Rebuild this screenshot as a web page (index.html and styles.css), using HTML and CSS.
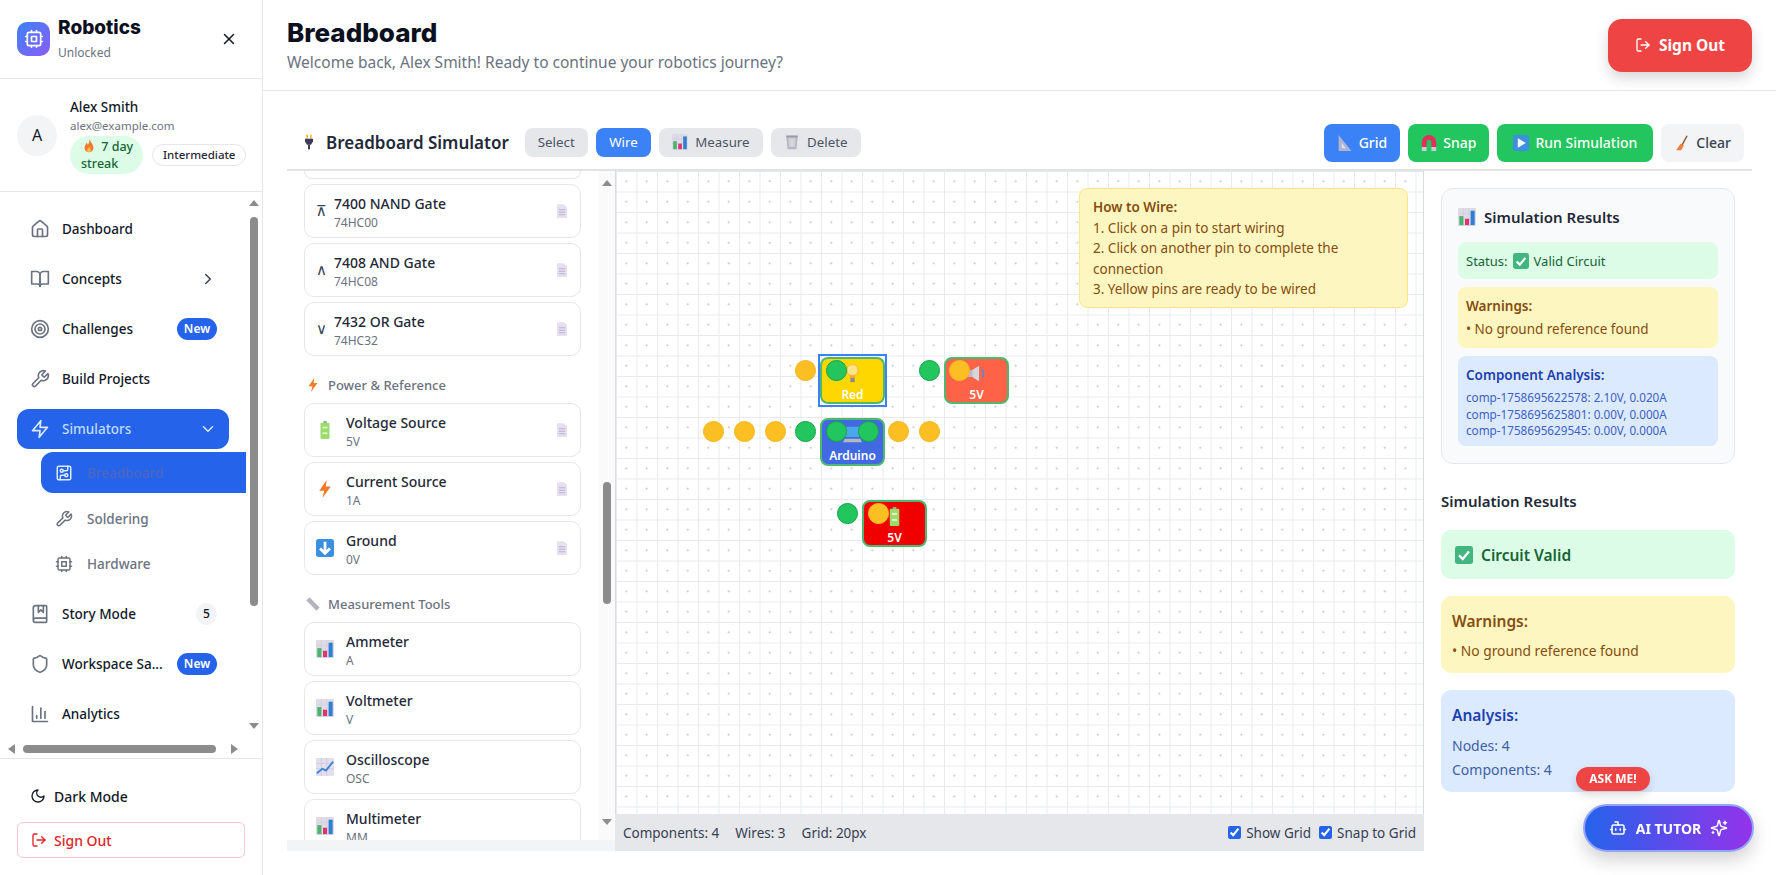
FILE: index.html
```html
<!DOCTYPE html>
<html>
<head>
    <meta charset="utf-8">
    <title>Breadboard</title>
    <link rel="stylesheet" href="styles.css">
</head>
<body>
<svg class="sprite" xmlns="http://www.w3.org/2000/svg">
    <symbol id="i-house" viewBox="0 0 24 24"><path d="M15 21v-8a1 1 0 0 0-1-1h-4a1 1 0 0 0-1 1v8"/><path d="M3 10a2 2 0 0 1 .709-1.528l7-5.999a2 2 0 0 1 2.582 0l7 5.999A2 2 0 0 1 21 10v9a2 2 0 0 1-2 2H5a2 2 0 0 1-2-2z"/></symbol>
    <symbol id="i-book" viewBox="0 0 24 24"><path d="M2 3h6a4 4 0 0 1 4 4v14a3 3 0 0 0-3-3H2z"/><path d="M22 3h-6a4 4 0 0 0-4 4v14a3 3 0 0 1 3-3h7z"/></symbol>
    <symbol id="i-target" viewBox="0 0 24 24"><circle cx="12" cy="12" r="10"/><circle cx="12" cy="12" r="6"/><circle cx="12" cy="12" r="2"/></symbol>
    <symbol id="i-wrench" viewBox="0 0 24 24"><path d="M14.7 6.3a1 1 0 0 0 0 1.4l1.6 1.6a1 1 0 0 0 1.4 0l3.77-3.77a6 6 0 0 1-7.94 7.94l-6.91 6.91a2.12 2.12 0 0 1-3-3l6.91-6.91a6 6 0 0 1 7.94-7.94l-3.76 3.76z"/></symbol>
    <symbol id="i-zap" viewBox="0 0 24 24"><polygon points="13 2 3 14 12 14 11 22 21 10 12 10 13 2"/></symbol>
    <symbol id="i-right" viewBox="0 0 24 24"><path d="m9 18 6-6-6-6"/></symbol>
    <symbol id="i-down" viewBox="0 0 24 24"><path d="m6 9 6 6 6-6"/></symbol>
    <symbol id="i-board" viewBox="0 0 24 24"><rect width="18" height="18" x="3" y="3" rx="2"/><path d="M11 9h4a2 2 0 0 0 2-2V3"/><circle cx="9" cy="9" r="2"/><path d="M7 21v-4a2 2 0 0 1 2-2h4"/><circle cx="15" cy="15" r="2"/></symbol>
    <symbol id="i-cpu" viewBox="0 0 24 24"><rect x="4" y="4" width="16" height="16" rx="2"/><rect x="9" y="9" width="6" height="6"/><path d="M15 2v2M15 20v2M2 15h2M2 9h2M20 15h2M20 9h2M9 2v2M9 20v2"/></symbol>
    <symbol id="i-story" viewBox="0 0 24 24"><path d="M10 2v8l3-3 3 3V2"/><path d="M4 19.5v-15A2.5 2.5 0 0 1 6.5 2H19a1 1 0 0 1 1 1v18a1 1 0 0 1-1 1H6.5a1 1 0 0 1 0-5H20"/></symbol>
    <symbol id="i-shield" viewBox="0 0 24 24"><path d="M20 13c0 5-3.5 7.5-7.66 8.95a1 1 0 0 1-.67-.01C7.5 20.5 4 18 4 13V6a1 1 0 0 1 1-1c2 0 4.5-1.2 6.24-2.72a1.17 1.17 0 0 1 1.52 0C14.51 3.81 17 5 19 5a1 1 0 0 1 1 1z"/></symbol>
    <symbol id="i-chart" viewBox="0 0 24 24"><path d="M3 3v18h18"/><path d="M18 17V9"/><path d="M13 17V5"/><path d="M8 17v-3"/></symbol>
    <symbol id="i-moon" viewBox="0 0 24 24"><path d="M12 3a6 6 0 0 0 9 9 9 9 0 1 1-9-9Z"/></symbol>
    <symbol id="i-logout" viewBox="0 0 24 24"><path d="M9 21H5a2 2 0 0 1-2-2V5a2 2 0 0 1 2-2h4"/><polyline points="16 17 21 12 16 7"/><line x1="21" x2="9" y1="12" y2="12"/></symbol>
    <symbol id="i-x" viewBox="0 0 24 24"><path d="M18 6 6 18"/><path d="m6 6 12 12"/></symbol>
    <symbol id="i-bot" viewBox="0 0 24 24"><path d="M12 8V4H8"/><rect width="16" height="12" x="4" y="8" rx="2"/><path d="M2 14h2M20 14h2M15 13v2M9 13v2"/></symbol>
    <symbol id="i-sparkles" viewBox="0 0 24 24"><path d="M9.937 15.5A2 2 0 0 0 8.5 14.063l-6.135-1.582a.5.5 0 0 1 0-.962L8.5 9.936A2 2 0 0 0 9.937 8.5l1.582-6.135a.5.5 0 0 1 .963 0L14.063 8.5A2 2 0 0 0 15.5 9.937l6.135 1.581a.5.5 0 0 1 0 .964L15.5 14.063a2 2 0 0 0-1.437 1.437l-1.582 6.135a.5.5 0 0 1-.963 0z"/><path d="M20 3v4M22 5h-4M4 17v2M5 18H3"/></symbol>

    <symbol id="e-plug" viewBox="0 0 24 24"><rect x="8" y="1" width="2.4" height="6" fill="#e8b93a"/><rect x="13.6" y="1" width="2.4" height="6" fill="#e8b93a"/><path d="M6 7h12v4l-3 5H9l-3-5z" fill="#3f3a5a"/><rect x="10.5" y="16" width="3" height="7" fill="#3f3a5a"/></symbol>
    <symbol id="e-chart" viewBox="2 2 20 20"><rect x="2" y="2" width="20" height="20" rx="1" fill="#dedbe6"/><path d="M2 8h20M2 14h20M8 2v20M14 2v20" stroke="#cfcbd8" stroke-width=".6"/><rect x="3.500" y="11" width="4.500" height="10" fill="#4cb36c"/><rect x="9.800" y="14" width="4.500" height="7" fill="#e0326e"/><rect x="16" y="5" width="4.500" height="16" fill="#2d7fd6"/></symbol>
    <symbol id="e-trash" viewBox="2 1 20 22"><path d="M4 4h16l-2 18H6z" fill="#b4b7c0"/><path d="M7 7l1.400 12h7.200L17 7z" fill="#d2d4da"/><rect x="4" y="3" width="16" height="2.400" fill="#9a9da8"/></symbol>
    <symbol id="e-triangle" viewBox="3 2 20 20"><path d="M5 2l16 20H5z" fill="#aeb3d2"/><path d="M9 12l5 6.500H9z" fill="#dfe1ee"/></symbol>
    <symbol id="e-magnet" viewBox="2 2 20 20"><path d="M6 17v-6a6 6 0 0 1 12 0v6" fill="none" stroke="#e0315a" stroke-width="6"/><rect x="3" y="17" width="6" height="5" fill="#c9ccd4"/><rect x="15" y="17" width="6" height="5" fill="#c9ccd4"/></symbol>
    <symbol id="e-play" viewBox="2 2 20 20"><rect x="2" y="2" width="20" height="20" rx="2" fill="#3f8fe0"/><polygon points="8 6 18 12 8 18" fill="#fff"/></symbol>
    <symbol id="e-broom" viewBox="2 1 20 22"><path d="M19 2l-7 13" stroke="#8d5a2b" stroke-width="2" fill="none"/><path d="M10 13l4.500 2.500L11 22l-7 0z" fill="#f0803c"/></symbol>
    <symbol id="e-check" viewBox="2 2 20 20"><rect x="2" y="2" width="20" height="20" rx="3" fill="#43b581"/><path d="M6.500 12.500l4 4 7-8.500" fill="none" stroke="#fff" stroke-width="2.600"/></symbol>
    <symbol id="e-fire" viewBox="3 1 18 22"><path d="M12.500 1c1 4.500 6.500 7.500 6.500 14a7 7 0 0 1-14 0c0-3.500 2.200-5 3-8 1.500 1 2 2.300 2.200 3.500 1.500-2.500 2.800-5.500 2.300-9.500z" fill="#f4792b"/><path d="M12 13c.5 2 3 3 3 5.500a3 3 0 0 1-6 0c0-2 2.500-3 3-5.500z" fill="#f9c04a"/></symbol>
    <symbol id="e-bolt" viewBox="1 1 22 22"><polygon points="14 1 5 14 11 14 9 23 19 9 13 9" fill="#f4792b"/></symbol>
    <symbol id="e-battery" viewBox="1 1 22 22"><rect x="10" y="1" width="4" height="3" fill="#9aa3a0"/><rect x="6.500" y="3" width="11" height="20" rx="1.500" fill="#9ddc6a"/><rect x="9" y="8" width="6" height="2" fill="#e6f7d8"/><rect x="9" y="15" width="6" height="2" fill="#e6f7d8"/></symbol>
    <symbol id="e-arrow" viewBox="2 2 20 20"><rect x="2" y="2" width="20" height="20" rx="3" fill="#3b8fe0"/><path d="M12 5v13M6.500 12.500l5.500 5.500 5.500-5.500" fill="none" stroke="#fff" stroke-width="3"/></symbol>
    <symbol id="e-ruler" viewBox="1 1 22 22"><path d="M4 4l16 16" stroke="#b5b5bd" stroke-width="7" fill="none"/></symbol>
    <symbol id="e-trend" viewBox="2 2 20 20"><rect x="2" y="2" width="20" height="20" rx="1" fill="#e4dfee"/><path d="M2 8h20M2 14h20M8 2v20M14 2v20" stroke="#cfc8dc" stroke-width="1"/><path d="M3 19l6-5 4 2 8-10" fill="none" stroke="#3b82d6" stroke-width="2"/></symbol>
    <symbol id="e-doc" viewBox="4 1 16 22"><path d="M4 1h11l5 5v17H4z" fill="#e6dff2"/><path d="M7 10h10M7 14h10M7 18h10" stroke="#b9b0ca" stroke-width="1.500"/></symbol>
    <symbol id="e-bulb" viewBox="4 1 16 22"><circle cx="12" cy="8" r="6.500" fill="#fde68a" stroke="#f6ad3c" stroke-width="1"/><path d="M9 14h6v3H9z" fill="#f4a93a"/><rect x="9.500" y="17" width="5" height="5" fill="#8a8a8a"/></symbol>
    <symbol id="e-speaker" viewBox="1 1 22 22"><rect x="2" y="8" width="5" height="8" fill="#b9bcc6"/><path d="M7 8l8-5v18l-8-5z" fill="#d4d6de"/><path d="M18 7a7 7 0 0 1 0 10" fill="none" stroke="#6b7fd6" stroke-width="2"/></symbol>
    <symbol id="e-laptop" viewBox="1 2 22 20"><rect x="4" y="3" width="16" height="12" rx="1" fill="#4aa8e8"/><path d="M3 17h18l2 4H1z" fill="#b4b8c0"/></symbol>
</svg>

<div class="app">
    <aside class="sidebar">
        <div class="brand">
            <div class="logo"><svg class="icon"><use href="#i-cpu"/></svg></div>
            <div class="brand-text">
                <div class="brand-name">Robotics</div>
                <div class="brand-sub">Unlocked</div>
            </div>
            <svg class="icon close"><use href="#i-x"/></svg>
        </div>

        <div class="profile">
            <div class="avatar">A</div>
            <div class="profile-info">
                <div class="profile-name">Alex Smith</div>
                <div class="profile-mail">alex@example.com</div>
                <div class="profile-tags">
                    <span class="streak"><svg class="emoji"><use href="#e-fire"/></svg> 7 day<br>streak</span>
                    <span class="level">Intermediate</span>
                </div>
            </div>
        </div>

        <div class="nav-wrap">
            <nav class="nav">
                <a class="nav-item"><svg class="icon"><use href="#i-house"/></svg><span>Dashboard</span></a>
                <a class="nav-item"><svg class="icon"><use href="#i-book"/></svg><span>Concepts</span><svg class="icon chevron"><use href="#i-right"/></svg></a>
                <a class="nav-item"><svg class="icon"><use href="#i-target"/></svg><span>Challenges</span><em class="badge">New</em></a>
                <a class="nav-item"><svg class="icon"><use href="#i-wrench"/></svg><span>Build Projects</span></a>
                <a class="nav-item active"><svg class="icon"><use href="#i-zap"/></svg><span>Simulators</span><svg class="icon chevron"><use href="#i-down"/></svg></a>
                <div class="subnav">
                    <a class="sub-item current"><svg class="icon"><use href="#i-board"/></svg><span>Breadboard</span></a>
                    <a class="sub-item"><svg class="icon"><use href="#i-wrench"/></svg><span>Soldering</span></a>
                    <a class="sub-item"><svg class="icon"><use href="#i-cpu"/></svg><span>Hardware</span></a>
                </div>
                <a class="nav-item"><svg class="icon"><use href="#i-story"/></svg><span>Story Mode</span><em class="count">5</em></a>
                <a class="nav-item"><svg class="icon"><use href="#i-shield"/></svg><span>Workspace Sa...</span><em class="badge">New</em></a>
                <a class="nav-item"><svg class="icon"><use href="#i-chart"/></svg><span>Analytics</span></a>
            </nav>
            <div class="vbar nav-vbar">
                <i class="arrow up"></i>
                <i class="thumb"></i>
                <i class="arrow dn"></i>
            </div>
        </div>
        <div class="hbar">
            <i class="arrow lf"></i>
            <i class="thumb"></i>
            <i class="arrow rt"></i>
        </div>

        <div class="side-foot">
            <a class="dark-toggle"><svg class="icon"><use href="#i-moon"/></svg>Dark Mode</a>
            <a class="side-signout"><svg class="icon"><use href="#i-logout"/></svg>Sign Out</a>
        </div>
    </aside>

    <main class="main">
        <header class="topbar">
            <div>
                <h1>Breadboard</h1>
                <p>Welcome back, Alex Smith! Ready to continue your robotics journey?</p>
            </div>
            <button class="signout"><svg class="icon"><use href="#i-logout"/></svg>Sign Out</button>
        </header>

        <section class="sim">
            <div class="toolbar">
                <svg class="emoji plug"><use href="#e-plug"/></svg>
                <h2>Breadboard Simulator</h2>
                <div class="tools">
                    <button class="tool">Select</button>
                    <button class="tool on">Wire</button>
                    <button class="tool"><svg class="emoji"><use href="#e-chart"/></svg>Measure</button>
                    <button class="tool"><svg class="emoji"><use href="#e-trash"/></svg>Delete</button>
                </div>
                <div class="actions">
                    <button class="act blue"><svg class="emoji"><use href="#e-triangle"/></svg>Grid</button>
                    <button class="act green"><svg class="emoji"><use href="#e-magnet"/></svg>Snap</button>
                    <button class="act green run"><svg class="emoji"><use href="#e-play"/></svg>Run Simulation</button>
                    <button class="act plain"><svg class="emoji"><use href="#e-broom"/></svg>Clear</button>
                </div>
            </div>

            <div class="workspace">
                <div class="palette">
                    <div class="palette-row">
                        <div class="parts">
                            <div class="part-tail"></div>
                            <div class="part gate"><span class="part-icon glyph">⊼</span><div class="part-text"><b>7400 NAND Gate</b><small>74HC00</small></div><svg class="emoji doc"><use href="#e-doc"/></svg></div>
                            <div class="part gate"><span class="part-icon glyph">∧</span><div class="part-text"><b>7408 AND Gate</b><small>74HC08</small></div><svg class="emoji doc"><use href="#e-doc"/></svg></div>
                            <div class="part gate"><span class="part-icon glyph">∨</span><div class="part-text"><b>7432 OR Gate</b><small>74HC32</small></div><svg class="emoji doc"><use href="#e-doc"/></svg></div>

                            <h3 class="group"><svg class="emoji"><use href="#e-bolt"/></svg>Power &amp; Reference</h3>
                            <div class="part"><svg class="emoji part-icon"><use href="#e-battery"/></svg><div class="part-text"><b>Voltage Source</b><small>5V</small></div><svg class="emoji doc"><use href="#e-doc"/></svg></div>
                            <div class="part"><svg class="emoji part-icon"><use href="#e-bolt"/></svg><div class="part-text"><b>Current Source</b><small>1A</small></div><svg class="emoji doc"><use href="#e-doc"/></svg></div>
                            <div class="part"><svg class="emoji part-icon"><use href="#e-arrow"/></svg><div class="part-text"><b>Ground</b><small>0V</small></div><svg class="emoji doc"><use href="#e-doc"/></svg></div>

                            <h3 class="group"><svg class="emoji"><use href="#e-ruler"/></svg>Measurement Tools</h3>
                            <div class="part"><svg class="emoji part-icon"><use href="#e-chart"/></svg><div class="part-text"><b>Ammeter</b><small>A</small></div></div>
                            <div class="part"><svg class="emoji part-icon"><use href="#e-chart"/></svg><div class="part-text"><b>Voltmeter</b><small>V</small></div></div>
                            <div class="part"><svg class="emoji part-icon"><use href="#e-trend"/></svg><div class="part-text"><b>Oscilloscope</b><small>OSC</small></div></div>
                            <div class="part last"><svg class="emoji part-icon"><use href="#e-chart"/></svg><div class="part-text"><b>Multimeter</b><small>MM</small></div></div>
                        </div>
                        <div class="vbar palette-vbar">
                            <i class="arrow up"></i>
                            <i class="thumb"></i>
                            <i class="arrow dn"></i>
                        </div>
                    </div>
                    <div class="palette-hbar"></div>
                </div>

                <div class="board">
                    <div class="canvas">
                        <div class="node node-red selected"><svg class="emoji"><use href="#e-bulb"/></svg><span>Red</span></div>
                        <div class="node node-speaker"><svg class="emoji"><use href="#e-speaker"/></svg><span>5V</span></div>
                        <div class="node node-arduino"><svg class="emoji"><use href="#e-laptop"/></svg><span>Arduino</span></div>
                        <div class="node node-battery"><svg class="emoji"><use href="#e-battery"/></svg><span>5V</span></div>

                        <i class="pin ready r1-a"></i>
                        <i class="pin wired r1-b"></i>
                        <i class="pin wired r1-c"></i>
                        <i class="pin ready r1-d"></i>
                        <i class="pin ready r2-a"></i>
                        <i class="pin ready r2-b"></i>
                        <i class="pin ready r2-c"></i>
                        <i class="pin wired r2-d"></i>
                        <i class="pin wired r2-e"></i>
                        <i class="pin wired r2-f"></i>
                        <i class="pin ready r2-g"></i>
                        <i class="pin ready r2-h"></i>
                        <i class="pin wired r3-a"></i>
                        <i class="pin ready r3-b"></i>

                        <div class="howto">
                            <b>How to Wire:</b><br>
                            1. Click on a pin to start wiring<br>
                            2. Click on another pin to complete the connection<br>
                            3. Yellow pins are ready to be wired
                        </div>
                    </div>
                    <div class="statusbar">
                        <span>Components: 4</span>
                        <span>Wires: 3</span>
                        <span>Grid: 20px</span>
                        <label class="first"><input type="checkbox" checked>Show Grid</label>
                        <label><input type="checkbox" checked>Snap to Grid</label>
                    </div>
                </div>

                <div class="results">
                    <div class="result-card">
                        <h3><svg class="emoji"><use href="#e-chart"/></svg>Simulation Results</h3>
                        <div class="mini ok">Status: <svg class="emoji"><use href="#e-check"/></svg> Valid Circuit</div>
                        <div class="mini warn">
                            <h4>Warnings:</h4>
                            <p>• No ground reference found</p>
                        </div>
                        <div class="mini info">
                            <h4>Component Analysis:</h4>
                            <p>comp-1758695622578: 2.10V, 0.020A</p>
                            <p>comp-1758695625801: 0.00V, 0.000A</p>
                            <p>comp-1758695629545: 0.00V, 0.000A</p>
                        </div>
                    </div>

                    <h3 class="results-title">Simulation Results</h3>
                    <div class="big ok valid"><svg class="emoji"><use href="#e-check"/></svg>Circuit Valid</div>
                    <div class="big warn">
                        <h4>Warnings:</h4>
                        <p>• No ground reference found</p>
                    </div>
                    <div class="big info">
                        <h4>Analysis:</h4>
                        <p>Nodes: 4</p>
                        <p>Components: 4</p>
                    </div>
                </div>
            </div>
        </section>
    </main>
</div>

<div class="ask">ASK ME!</div>
<button class="tutor"><svg class="icon"><use href="#i-bot"/></svg>AI TUTOR<svg class="icon"><use href="#i-sparkles"/></svg></button>
</body>
</html>
```

FILE: styles.css
```css
* {
    box-sizing: border-box;
}

html, body {
    margin: 0;
    height: 100%;
    overflow: hidden;
}

body {
    font-family: "Noto Sans", "Open Sans", sans-serif;
    font-size: 14px;
    color: #111827;
    background: white;
}

h1, h2, h3, h4, p {
    margin: 0;
}

button {
    font: inherit;
    border: 0;
    cursor: pointer;
}

em {
    font-style: normal;
}

.sprite {
    display: none;
}

.icon {
    width: 20px;
    height: 20px;
    flex: none;
    fill: none;
    stroke: currentColor;
    stroke-width: 2;
    stroke-linecap: round;
    stroke-linejoin: round;
}

.emoji {
    width: 18px;
    height: 18px;
    flex: none;
}

.app {
    display: flex;
    height: 875px;
}

/* sidebar */
.sidebar {
    width: 263px;
    flex: none;
    display: flex;
    flex-direction: column;
    border-right: 1px solid #e5e7eb;
}

.brand {
    height: 79px;
    flex: none;
    display: flex;
    align-items: center;
    gap: 8px;
    padding: 0 24px 0 17px;
    border-bottom: 1px solid #e5e7eb;
}

.logo {
    width: 33px;
    height: 34px;
    border-radius: 10px;
    display: flex;
    align-items: center;
    justify-content: center;
    color: white;
    background: linear-gradient(135deg, #3b82f6, #8b5cf6);
}

.brand-text {
    flex: 1;
}

.brand-name {
    font-family: Inter, sans-serif;
    font-size: 19px;
    font-weight: 800;
    line-height: 24px;
    color: #0b1020;
}

.brand-sub {
    font-size: 12px;
    line-height: 18px;
    margin-top: 4px;
    color: #6b7280;
}

.close {
    width: 18px;
    height: 18px;
    color: #111827;
}

.profile {
    height: 113px;
    flex: none;
    display: flex;
    align-items: center;
    gap: 13px;
    padding: 0 17px;
    border-bottom: 1px solid #e5e7eb;
}

.avatar {
    width: 40px;
    height: 41px;
    flex: none;
    border-radius: 50%;
    background: #f3f4f6;
    display: flex;
    align-items: center;
    justify-content: center;
    font-size: 16px;
}

.profile-name {
    font-size: 13.500px;
    font-weight: 500;
    line-height: 20px;
}

.profile-mail {
    font-size: 11.500px;
    line-height: 17px;
    color: #6b7280;
}

.profile-tags {
    display: flex;
    align-items: center;
    gap: 9px;
    margin-top: 2px;
}

.streak {
    width: 73px;
    height: 38px;
    padding: 2px 0 0 11px;
    border-radius: 19px;
    background: #dcfce7;
    color: #166534;
    font-size: 12.500px;
    line-height: 17px;
    font-weight: 500;
    white-space: nowrap;
}

.streak .emoji {
    width: 12px;
    height: 14px;
    margin: 0 3px 0 2px;
    vertical-align: -2px;
}

.level {
    height: 22px;
    padding: 0 10px;
    border: 1px solid #e5e7eb;
    border-radius: 11px;
    font-size: 11.500px;
    line-height: 20px;
    font-weight: 500;
    color: #1f2937;
}

.nav-wrap {
    flex: 1;
    min-height: 0;
    display: flex;
}

.nav {
    width: 246px;
    flex: none;
    overflow: hidden;
    padding: 17px 0 0 17px;
}

.nav-item {
    width: 212px;
    height: 40px;
    margin-bottom: 10px;
    padding: 0 12px 0 13px;
    display: flex;
    align-items: center;
    gap: 12px;
    border-radius: 12px;
    font-size: 13.500px;
    font-weight: 500;
    color: #111827;
}

.nav-item .icon {
    color: #6b7280;
}

.nav-item span {
    flex: 1;
    white-space: nowrap;
}

.nav-item .chevron {
    width: 18px;
    height: 18px;
    color: #374151;
}

.nav-item.active {
    background: #2563eb;
    color: #bfdbfe;
    margin-bottom: 3px;
}

.nav-item.active .icon {
    color: #dbeafe;
}

.badge {
    width: 40px;
    height: 22px;
    flex: none;
    border-radius: 11px;
    background: #2563eb;
    color: white;
    font-size: 12px;
    font-weight: 600;
    line-height: 22px;
    text-align: center;
}

.count {
    width: 21px;
    height: 22px;
    flex: none;
    border-radius: 50%;
    background: #f3f4f6;
    font-size: 12px;
    font-weight: 500;
    line-height: 22px;
    text-align: center;
}

.subnav {
    margin: 0 0 10px 24px;
}

.sub-item {
    height: 41px;
    margin-bottom: 4px;
    padding-left: 14px;
    display: flex;
    align-items: center;
    gap: 14px;
    font-size: 13.500px;
    color: #6b7280;
    font-weight: 500;
    white-space: nowrap;
}

.sub-item .icon {
    width: 18px;
    height: 18px;
}

.sub-item.current {
    width: 220px;
    border-radius: 12px 0 0 12px;
    background: #2563eb;
    color: #4a67c4;
    margin-bottom: 5px;
}

.sub-item.current .icon {
    color: #dbeafe;
}

.vbar {
    flex: none;
    position: relative;
    display: flex;
    flex-direction: column;
    align-items: center;
}

.nav-vbar {
    width: 16px;
    padding-top: 8px;
}

.nav-vbar .thumb {
    height: 389px;
    margin: 11px 0 117px;
}

.vbar .thumb {
    display: block;
    width: 8px;
    border-radius: 4px;
    background: #8c8c8c;
}

.arrow {
    display: block;
    width: 0;
    height: 0;
    flex: none;
    border: 5px solid transparent;
}

.arrow.up {
    border-top: 0;
    border-bottom: 6px solid #8c8c8c;
}

.arrow.dn {
    border-bottom: 0;
    border-top: 6px solid #8c8c8c;
}

.arrow.lf {
    border-left: 0;
    border-right: 7px solid #8c8c8c;
}

.arrow.rt {
    border-right: 0;
    border-left: 7px solid #8c8c8c;
}

.hbar {
    height: 19px;
    flex: none;
    display: flex;
    align-items: center;
    padding: 0 0 0 8px;
    border-bottom: 1px solid #e5e7eb;
}

.hbar .thumb {
    display: block;
    width: 193px;
    height: 8px;
    margin: 0 15px 0 8px;
    border-radius: 4px;
    background: #8c8c8c;
}

.side-foot {
    height: 116px;
    flex: none;
    padding: 25px 17px 0;
}

.dark-toggle {
    height: 24px;
    padding-left: 13px;
    display: flex;
    align-items: center;
    gap: 8px;
    font-weight: 500;
}

.dark-toggle .icon,
.side-signout .icon {
    width: 16px;
    height: 16px;
}

.side-signout {
    height: 36px;
    margin-top: 14px;
    padding-left: 13px;
    display: flex;
    align-items: center;
    gap: 7px;
    border: 1px solid #fecaca;
    border-radius: 6px;
    color: #dc2626;
    font-weight: 500;
}

/* main column */
.main {
    flex: 1;
    min-width: 0;
    display: flex;
    flex-direction: column;
}

.topbar {
    height: 91px;
    flex: none;
    display: flex;
    align-items: center;
    justify-content: space-between;
    padding: 0 24px 0 24px;
    border-bottom: 1px solid #e5e7eb;
}

.topbar h1 {
    font-family: Inter, sans-serif;
    font-size: 26px;
    font-weight: 800;
    line-height: 32px;
    color: #0b1020;
}

.topbar p {
    font-size: 15.500px;
    line-height: 24px;
    margin-top: 1px;
    color: #6b7280;
}

.signout {
    width: 144px;
    height: 53px;
    display: flex;
    align-items: center;
    justify-content: center;
    gap: 8px;
    border-radius: 14px;
    background: #ef4444;
    color: white;
    font-size: 15.500px;
    font-weight: 700;
    box-shadow: 0 6px 14px rgba(0, 0, 0, 0.16);
}

.signout .icon {
    width: 16px;
    height: 16px;
}

.sim {
    flex: 1;
    min-height: 0;
    display: flex;
    flex-direction: column;
    padding: 24px 24px 24px;
}

.toolbar {
    height: 56px;
    flex: none;
    display: flex;
    align-items: center;
    padding: 0 8px 0 14px;
    border-bottom: 2px solid #e0e2e6;
}

.plug {
    width: 16px;
    height: 20px;
    margin-right: 9px;
}

.toolbar h2 {
    font-size: 17px;
    font-weight: 600;
    color: #1f2937;
    white-space: nowrap;
}

.tools {
    display: flex;
    gap: 8.500px;
    margin-left: 16px;
    flex: 1;
}

.tool {
    height: 29px;
    padding: 0 13px;
    display: flex;
    align-items: center;
    gap: 7px;
    border-radius: 8px;
    background: #e5e7eb;
    color: #4b5563;
    font-size: 13.300px;
}

.tool .emoji {
    width: 16px;
    height: 16px;
}

.tool.on {
    background: #3b82f6;
    color: white;
}

.actions {
    display: flex;
    gap: 8px;
    margin-top: 1px;
}

.act {
    height: 38px;
    padding: 0 13px;
    display: flex;
    align-items: center;
    justify-content: center;
    gap: 6px;
    border-radius: 8px;
    font-size: 14px;
    font-weight: 500;
    color: white;
}

.act .emoji {
    width: 16px;
    height: 16px;
}

.act.run {
    width: 156px;
}

.act.blue {
    background: #3b82f6;
}

.act.green {
    background: #22c55e;
}

.act.plain {
    background: #f3f4f6;
    color: #374151;
}

.workspace {
    flex: 1;
    min-height: 0;
    display: flex;
}

/* component palette */
.palette {
    width: 328px;
    flex: none;
    display: flex;
    flex-direction: column;
}

.palette-row {
    flex: 1;
    min-height: 0;
    display: flex;
}

.parts {
    width: 312px;
    flex: none;
    overflow: hidden;
    padding: 0 18px 0 17px;
    display: flex;
    flex-direction: column;
    gap: 5px;
}

.part-tail {
    height: 8px;
    flex: none;
    border: 1px solid #e5e7eb;
    border-top: 0;
    border-radius: 0 0 10px 10px;
}

.part {
    height: 54px;
    flex: none;
    padding: 0 13px 0 11px;
    display: flex;
    align-items: center;
    gap: 12px;
    border: 1px solid #e5e7eb;
    border-radius: 10px;
    background: white;
}

.part.gate {
    gap: 0;
}

.part-icon {
    width: 18px;
    height: 20px;
}

.glyph {
    font-family: "DejaVu Sans", sans-serif;
    font-size: 15px;
    line-height: 20px;
    color: #374151;
}

.part-text {
    flex: 1;
    min-width: 0;
    padding-top: 3px;
}

.part-text b {
    display: block;
    font-weight: 500;
    line-height: 20px;
    color: #1f2937;
}

.part-text small {
    display: block;
    font-size: 12px;
    line-height: 18px;
    color: #6b7280;
}

.doc {
    width: 10px;
    height: 14px;
}

.group {
    height: 19px;
    flex: none;
    margin: 14px 0 4px;
    padding-left: 2px;
    display: flex;
    align-items: center;
    gap: 8px;
    font-size: 13px;
    font-weight: 500;
    color: #6b7280;
}

.group .emoji {
    width: 14px;
    height: 14px;
}

.palette-vbar {
    width: 16px;
    padding-top: 9px;
    background: #fafafa;
}

.palette-vbar .thumb {
    height: 122px;
    margin: 296px 0 215px;
}

.palette-hbar {
    height: 11px;
    flex: none;
    background: #f3f4f6;
}

/* board */
.board {
    width: 809px;
    flex: none;
    display: flex;
    flex-direction: column;
}

.canvas {
    flex: 1;
    position: relative;
    overflow: hidden;
    border-left: 1px solid #d8dbe0;
    border-right: 1px solid #d8dbe0;
    background-color: white;
    background-image:
        radial-gradient(circle, #b8b8b8 0.800px, transparent 1.100px),
        linear-gradient(to right, #e8eaee 1px, transparent 1px),
        linear-gradient(to bottom, #e8eaee 1px, transparent 1px);
    background-size: 20.500px 20.500px;
}

.node {
    position: absolute;
    width: 65px;
    height: 47px;
    padding-top: 5px;
    display: flex;
    flex-direction: column;
    align-items: center;
    gap: 4px;
    border: 2px solid #4fb870;
    border-radius: 8px;
    color: white;
    font-size: 12px;
    font-weight: 600;
    line-height: 16px;
}

.node .emoji {
    width: 19px;
    height: 19px;
}

.selected::after {
    content: "";
    box-sizing: border-box;
    position: absolute;
    left: -4px;
    top: -5px;
    width: 69px;
    height: 53px;
    border: 2px solid #3b82f6;
}

.node-red {
    left: 204px;
    top: 186px;
    background: #ffd700;
}

.node-speaker {
    left: 328px;
    top: 186px;
    background: #ff6347;
}

.node-arduino {
    left: 204px;
    top: 247px;
    height: 48px;
    background: #4169e1;
}

.node-battery {
    left: 246px;
    top: 329px;
    background: #f00000;
}

.pin {
    position: absolute;
    width: 20.500px;
    height: 20.500px;
    border-radius: 50%;
    border: 1px solid;
}

.pin.ready {
    background: #fbbf24;
    border-color: #f3b820;
}

.pin.wired {
    background: #22c55e;
    border-color: #16a34a;
}

.r1-a { left: 179px; top: 189px; }
.r1-b { left: 210px; top: 189px; }
.r1-c { left: 303px; top: 189px; }
.r1-d { left: 333px; top: 189px; }
.r2-a { left: 87px; top: 250px; }
.r2-b { left: 118px; top: 250px; }
.r2-c { left: 149px; top: 250px; }
.r2-d { left: 179px; top: 250px; }
.r2-e { left: 210px; top: 250px; }
.r2-f { left: 242px; top: 250px; }
.r2-g { left: 272px; top: 250px; }
.r2-h { left: 303px; top: 250px; }
.r3-a { left: 221px; top: 332px; }
.r3-b { left: 252px; top: 332px; }

.howto {
    position: absolute;
    left: 463px;
    top: 17px;
    width: 329px;
    height: 120px;
    padding: 8px 13px;
    border: 1px solid #fde68a;
    border-radius: 8px;
    background: #fef6c0;
    color: #854d0e;
    font-size: 13.500px;
    line-height: 20.500px;
}

.howto b {
    font-weight: 600;
}

.statusbar {
    height: 37px;
    flex: none;
    display: flex;
    align-items: center;
    gap: 16px;
    padding: 0 8px;
    background: #e5e7eb;
    color: #374151;
    font-size: 13.500px;
}

.statusbar label {
    display: flex;
    align-items: center;
    gap: 5px;
    margin-left: -8px;
}

.statusbar label.first {
    margin-left: auto;
}

.statusbar input {
    width: 13px;
    height: 13px;
    margin: 0;
    accent-color: #2563eb;
}

/* results */
.results {
    flex: 1;
    min-width: 0;
    padding: 17px 17px 0 17px;
}

.result-card {
    height: 276px;
    padding: 16px 16px 0;
    border: 1px solid #e5e7eb;
    border-radius: 12px;
    background: #f9fafb;
}

.result-card h3 {
    height: 24px;
    margin-bottom: 13px;
    display: flex;
    align-items: center;
    gap: 8px;
    font-size: 15px;
    font-weight: 600;
    line-height: 24px;
    color: #1f2937;
}

.mini {
    margin-bottom: 8px;
    padding: 9px 8px;
    border-radius: 8px;
    font-size: 13.500px;
    line-height: 18px;
}

.mini.ok {
    height: 37px;
    padding: 0 8px;
    display: flex;
    align-items: center;
    gap: 5px;
    font-size: 13px;
    background: #dcfce7;
    color: #166534;
}

.mini.ok .emoji {
    width: 16px;
    height: 16px;
}

.mini.warn {
    height: 61px;
    background: #fef6c0;
    color: #854d0e;
}

.mini.info {
    height: 90px;
    background: #dbeafe;
    color: #1e40af;
}

.mini h4 {
    font-size: 13.500px;
    font-weight: 600;
    line-height: 20px;
    margin-bottom: 4px;
}

.mini.info p {
    font-size: 11.700px;
    line-height: 16.500px;
    color: #3f5fc4;
}

.results-title {
    margin: 25px 0 17px;
    font-size: 15px;
    font-weight: 600;
    line-height: 24px;
    color: #1f2937;
}

.big {
    margin-bottom: 17px;
    padding: 13px 11px;
    border-radius: 10px;
    font-size: 14px;
}

.big h4 {
    font-size: 15.500px;
    font-weight: 600;
    line-height: 24px;
    margin-bottom: 7px;
}

.big.ok {
    background: #dcfce7;
    color: #166534;
}

.big.warn {
    height: 77px;
    background: #fef6c0;
    color: #854d0e;
}

.big.warn p {
    font-size: 13.800px;
    padding-top: 1px;
}

.big.info {
    height: 102px;
    background: #dbeafe;
    color: #1e40af;
}

.big.info p {
    line-height: 24px;
    color: #3f5fa8;
}

.valid {
    height: 49px;
    padding: 0 14px;
    display: flex;
    align-items: center;
    gap: 8px;
    font-size: 15.500px;
    font-weight: 600;
}

/* floating tutor */
.ask {
    position: fixed;
    left: 1576px;
    top: 767px;
    width: 74px;
    height: 24px;
    border-radius: 12px;
    background: #ef4444;
    color: white;
    font-size: 12px;
    font-weight: 700;
    line-height: 24px;
    text-align: center;
    box-shadow: 0 4px 10px rgba(0, 0, 0, 0.15);
}

.tutor {
    position: fixed;
    left: 1583px;
    top: 804px;
    width: 171px;
    height: 48px;
    display: flex;
    align-items: center;
    justify-content: center;
    gap: 9px;
    border: 2px solid #93a5f5;
    border-radius: 24px;
    background: linear-gradient(90deg, #2563eb, #9333ea);
    color: white;
    font-size: 14px;
    font-weight: 700;
    box-shadow: 0 8px 18px rgba(0, 0, 0, 0.18);
}

.tutor .icon {
    width: 18px;
    height: 18px;
}
```
